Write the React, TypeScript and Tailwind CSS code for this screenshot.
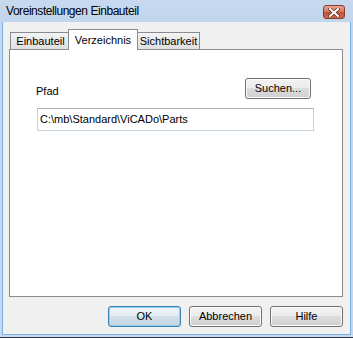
import React from "react";

const btnBase =
  "h-[21px] rounded-[3px] border flex items-center justify-center text-[11px] text-black leading-none";
const btnNormal =
  "border-[#707070] bg-[linear-gradient(to_bottom,#f2f2f2_0%,#ebebeb_50%,#dddddd_50%,#cfcfcf_100%)] shadow-[inset_0_0_0_1px_#fbfbfb]";
const btnDefault =
  "border-[#3c7fb1] bg-[linear-gradient(to_bottom,#eef4f9_0%,#e4ecf3_50%,#d3dfea_50%,#c6d5e2_100%)] shadow-[inset_0_0_0_1px_#8fd2f6]";

export default function App() {
  return (
    <div className="w-[353px] h-[338px] flex flex-col bg-[#c4d7ee] px-[2px] pb-[2px] border-b border-[#2f3a46] font-['Liberation_Sans',Arial,sans-serif] text-black">
      {/* Title bar */}
      <div className="h-[22px] -mx-[2px] flex items-start bg-[linear-gradient(to_bottom,#c7d9ef,#c1d5ec)]">
        <span className="pl-[6px] pt-[4px] text-[12px] leading-[14px] tracking-[-0.45px] text-black">
          Voreinstellungen Einbauteil
        </span>
        <div className="ml-auto mr-[8px] mt-[5px] w-[22px] h-[14px] rounded-[3px] border border-[#8b3b2b] bg-[linear-gradient(to_bottom,#e9a594_0%,#d27a63_45%,#c0533a_55%,#c96a50_100%)] flex items-center justify-center">
          <svg width="12" height="9" viewBox="0 0 12 9">
            <path
              d="M2 1 L10 8 M10 1 L2 8"
              stroke="#5a2a20"
              strokeWidth="3.4"
              strokeLinecap="square"
            />
            <path
              d="M2 1 L10 8 M10 1 L2 8"
              stroke="#ffffff"
              strokeWidth="2"
              strokeLinecap="square"
            />
          </svg>
        </div>
      </div>

      {/* Body */}
      <div className="flex-1 flex flex-col bg-[#f0f0f0] border-l border-r border-b border-[#7bb1de]">
        {/* Tab strip */}
        <div className="pt-[7px] pl-[7px] flex items-end relative z-10">
          <div className="h-[17px] w-[58px] border-l border-t border-[#898c95] bg-[linear-gradient(to_bottom,#f3f3f3,#e0e0e0)] flex items-center justify-center text-[11px] leading-none pt-[1px] pl-[2px]">
            Einbauteil
          </div>
          <div className="h-[21px] w-[70px] -mb-[1px] border-l border-t border-r border-[#898c95] bg-white flex items-start justify-center text-[11px] leading-none pt-[5px]">
            Verzeichnis
          </div>
          <div className="h-[17px] w-[62px] border-t border-r border-[#898c95] bg-[linear-gradient(to_bottom,#f3f3f3,#e0e0e0)] flex items-center justify-center text-[11px] leading-none pt-[1px]">
            Sichtbarkeit
          </div>
        </div>

        {/* Tab panel */}
        <div className="ml-[6px] mr-[7px] h-[248px] border border-[#898c95] bg-white pt-[28px] pl-[27px] pr-[28px]">
          <div className="flex items-end justify-between pr-[3px]">
            <span className="text-[11px] leading-[13px] -ml-[1px] mb-[1px]">Pfad</span>
            <div className={`${btnBase} ${btnNormal} w-[66px]`}>Suchen...</div>
          </div>
          <div className="mt-[9px] h-[23px] border border-t-[#abadb3] border-l-[#c6cfdb] border-r-[#c6cfdb] border-b-[#c6d3e3] bg-white flex items-center pl-[2px] text-[11px] leading-none">
            C:\mb\Standard\ViCADo\Parts
          </div>
        </div>

        {/* Buttons */}
        <div className="mt-[9px] mr-[7px] flex justify-end gap-[8px]">
          <div className={`${btnBase} ${btnDefault} w-[73px]`}>OK</div>
          <div className={`${btnBase} ${btnNormal} w-[73px]`}>Abbrechen</div>
          <div className={`${btnBase} ${btnNormal} w-[73px]`}>Hilfe</div>
        </div>
      </div>
    </div>
  );
}
